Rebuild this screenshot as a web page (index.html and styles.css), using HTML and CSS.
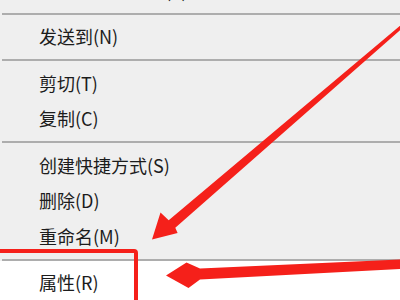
FILE: index.html
```html
<!DOCTYPE html>
<html lang="zh-CN">
<head>
<meta charset="utf-8">
<title>右键菜单</title>
<link rel="stylesheet" href="styles.css">
</head>
<body>
<div class="menu">
  <div class="item">还原以前的版本(V)</div>
  <div class="sep"><div class="sep-line"></div></div>
  <div class="item">发送到(N)</div>
  <div class="sep"><div class="sep-line"></div></div>
  <div class="item">剪切(T)</div>
  <div class="item">复制(C)</div>
  <div class="sep"><div class="sep-line"></div></div>
  <div class="item">创建快捷方式(S)</div>
  <div class="item">删除(D)</div>
  <div class="item">重命名(M)</div>
  <div class="sep sep--last"><div class="sep-line"></div></div>
  <div class="section-hover">
    <div class="item">属性(R)</div>
  </div>
</div>
<div class="annot">
  <div class="box"></div>
  <svg class="arrows" width="400" height="300" viewBox="0 0 400 300">
    <polygon fill="#f5201a" points="411,20.5 175.3,227.8 177.6,233 152,239.5 160.5,212.5 168.7,220.2 409,18.3"/>
    <polygon fill="#f5201a" points="410,259 200,268.5 186.5,262.5 166,275.5 188.5,288 200,279.5 410,268.5"/>
  </svg>
</div>
</body>
</html>
```

FILE: styles.css
```css
html, body {
  margin: 0;
  padding: 0;
}
body {
  width: 400px;
  height: 300px;
  overflow: hidden;
  background: #efefef;
  font-family: "Noto Sans CJK SC", "Noto Sans", sans-serif;
  color: #1c1c1c;
  position: relative;
}
.menu {
  display: flex;
  flex-direction: column;
  margin-top: -27.5px;
}
.item {
  height: 35.5px;
  line-height: 35.5px;
  padding-left: 39px;
  font-size: 18px;
  white-space: nowrap;
}
.sep {
  padding: 4.5px 0 4.5px 2px;
}
.sep--last {
  padding-bottom: 0;
}
.sep-line {
  height: 2px;
  background: #adadad;
}
.section-hover {
  background: #ffffff;
  padding-top: 4.5px;
  height: 60px;
}
.annot {
  position: absolute;
  left: 0;
  top: 0;
  width: 400px;
  height: 300px;
  pointer-events: none;
}
.box {
  position: absolute;
  left: -10px;
  top: 249px;
  width: 139.5px;
  height: 80px;
  border: 4px solid #f5201a;
  border-radius: 4px;
}
.arrows {
  position: absolute;
  left: 0;
  top: 0;
}
```
